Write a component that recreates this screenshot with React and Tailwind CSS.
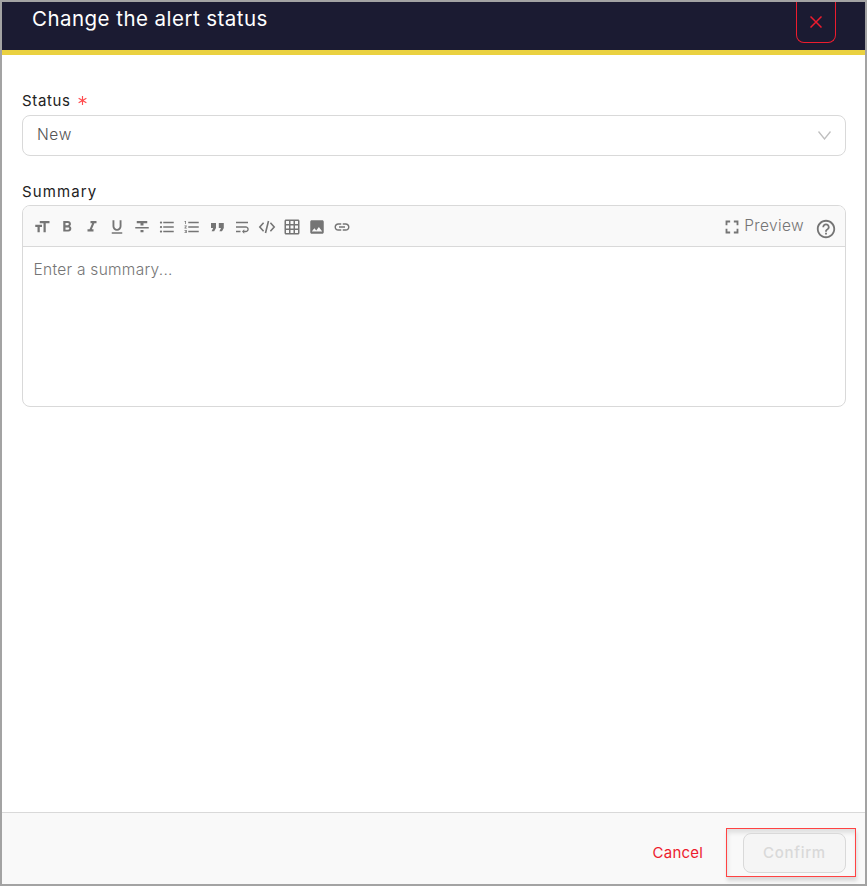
import {
  MdFormatSize, MdFormatBold, MdFormatItalic, MdFormatUnderlined, MdFormatStrikethrough,
  MdFormatListBulleted, MdFormatListNumbered, MdWrapText,
  MdGridOn, MdImage, MdLink, MdFullscreen, MdHelpOutline,
} from 'react-icons/md';

function QuoteIcon({ className }) {
  return (
    <svg className={className} viewBox="0 0 18 18" fill="currentColor">
      <path d="M3 5h5v5L6.2 13.2H3.6L5.2 10H3zM10.8 5h5v5L14 13.2h-2.6L13 10h-2.2z" />
    </svg>
  );
}

function CodeIcon({ className }) {
  return (
    <svg className={className} viewBox="0 0 18 18" fill="none" stroke="currentColor" strokeWidth="1.6">
      <path d="M5.6 4.8 1.8 9l3.8 4.2M12.4 4.8 16.2 9l-3.8 4.2M10.5 3 7.5 15" />
    </svg>
  );
}

const tools = [
  ['Heading', MdFormatSize], ['Bold', MdFormatBold], ['Italic', MdFormatItalic],
  ['Underline', MdFormatUnderlined], ['Strikethrough', MdFormatStrikethrough],
  ['Bulleted list', MdFormatListBulleted], ['Numbered list', MdFormatListNumbered],
  ['Quote', QuoteIcon], ['Wrap', MdWrapText], ['Code', CodeIcon],
  ['Table', MdGridOn], ['Image', MdImage], ['Link', MdLink],
];

function Header() {
  return (
    <header className="flex h-[53px] shrink-0 items-start justify-between border-b-[5px] border-[#ead140] bg-[#1b1b32] pr-[29px] pl-[30px]">
      <h1 className="mt-[2px] text-[20.5px] leading-[30px] tracking-[0.46px] text-white">Change the alert status</h1>
      <button aria-label="Close" className="flex h-[41px] w-10 items-center justify-center rounded-b-lg border border-t-0 border-[#ed1c2e] text-[#ed1c2e]">
        <svg className="h-3 w-3" viewBox="0 0 12 12" fill="none" stroke="currentColor" strokeWidth="1.5">
          <path d="M0.5 0.5 11.5 11.5M11.5 0.5 0.5 11.5" />
        </svg>
      </button>
    </header>
  );
}

function Editor() {
  return (
    <section className="flex h-[202px] flex-col overflow-hidden rounded-lg border border-[#d9d9d9]">
      <div className="flex h-[41px] shrink-0 items-center justify-between border-b border-[#d9d9d9] bg-[#f9f9f9] pr-[9px] pl-[10px] text-[#757575]">
        <div className="flex gap-[7px] pt-[2px]">
          {tools.map(([label, Icon]) => (
            <button key={label} aria-label={label}><Icon className="h-[18px] w-[18px]" /></button>
          ))}
        </div>
        <div className="flex items-center">
          <MdFullscreen className="mt-[2px] mr-[1px] h-[22px] w-[22px]" />
          <span className="mr-[11px] text-[15.5px] leading-5 font-light tracking-[0.35px]">Preview</span>
          <MdHelpOutline className="-mr-px mt-[5px] h-[22px] w-[22px]" />
        </div>
      </div>
      <div className="px-[10.5px] pt-[13px] text-[15.5px] leading-5 font-light tracking-[0.28px] text-[#757575]">Enter a summary...</div>
    </section>
  );
}

export default function App() {
  return (
    <div className="flex h-[886px] w-[867px] flex-col border-2 border-[#a3a3a3] bg-white font-['Inter','Open_Sans',sans-serif]">
      <Header />
      <main className="flex flex-1 flex-col pt-[35px] pr-[19px] pl-5">
        <label className="flex h-5 items-center pt-px text-[15px] leading-5 tracking-[0.65px] text-[#222]">
          Status
          <svg className="-mt-px ml-[7px] h-[9px] w-[9px] text-[#ff4d4f]" viewBox="0 0 10 10" stroke="currentColor" strokeWidth="1.3">
            <path d="M5 0V10M0.7 2.5 9.3 7.5M9.3 2.5 0.7 7.5" />
          </svg>
        </label>
        <div className="mt-[5px] flex h-[41px] items-center justify-between rounded-lg border border-[#d9d9d9] pr-[14px] pl-[14px] text-[15.5px] font-light text-[#555]">
          <span className="-mt-[2px] leading-5 tracking-[0.6px]">New</span>
          <svg className="h-[9px] w-[13px] text-[#bfbfbf]" viewBox="0 0 13 9" fill="none" stroke="currentColor" strokeWidth="1.3">
            <path d="M0.5 0.5 6.5 8 12.5 0.5" />
          </svg>
        </div>
        <div className="mt-[26px] mb-[3px] h-5 text-[15px] leading-5 tracking-[1.1px] text-[#222]">Summary</div>
        <Editor />
      </main>
      <footer className="flex h-[72px] shrink-0 items-start justify-end border-t border-[#d9d9d9] bg-[#f9f9f9] pt-[15px] pr-[9px]">
        <button className="mt-[15px] mr-[23px] text-[15px] leading-5 tracking-[0.2px] text-[#ed1c2e]">Cancel</button>
        <div className="flex h-[49px] w-[130px] items-start justify-end border border-[#ff4343] pt-1 pr-[9px] shadow-[1px_4px_4px_rgba(0,0,0,0.13),inset_1px_4px_4px_rgba(0,0,0,0.1)]">
          <button className="h-10 w-[103px] rounded-lg border border-[#d9d9d9] bg-[#f5f5f5] text-[15px] leading-5 font-medium tracking-[0.7px] text-[#d9d9d9]">Confirm</button>
        </div>
      </footer>
    </div>
  );
}
